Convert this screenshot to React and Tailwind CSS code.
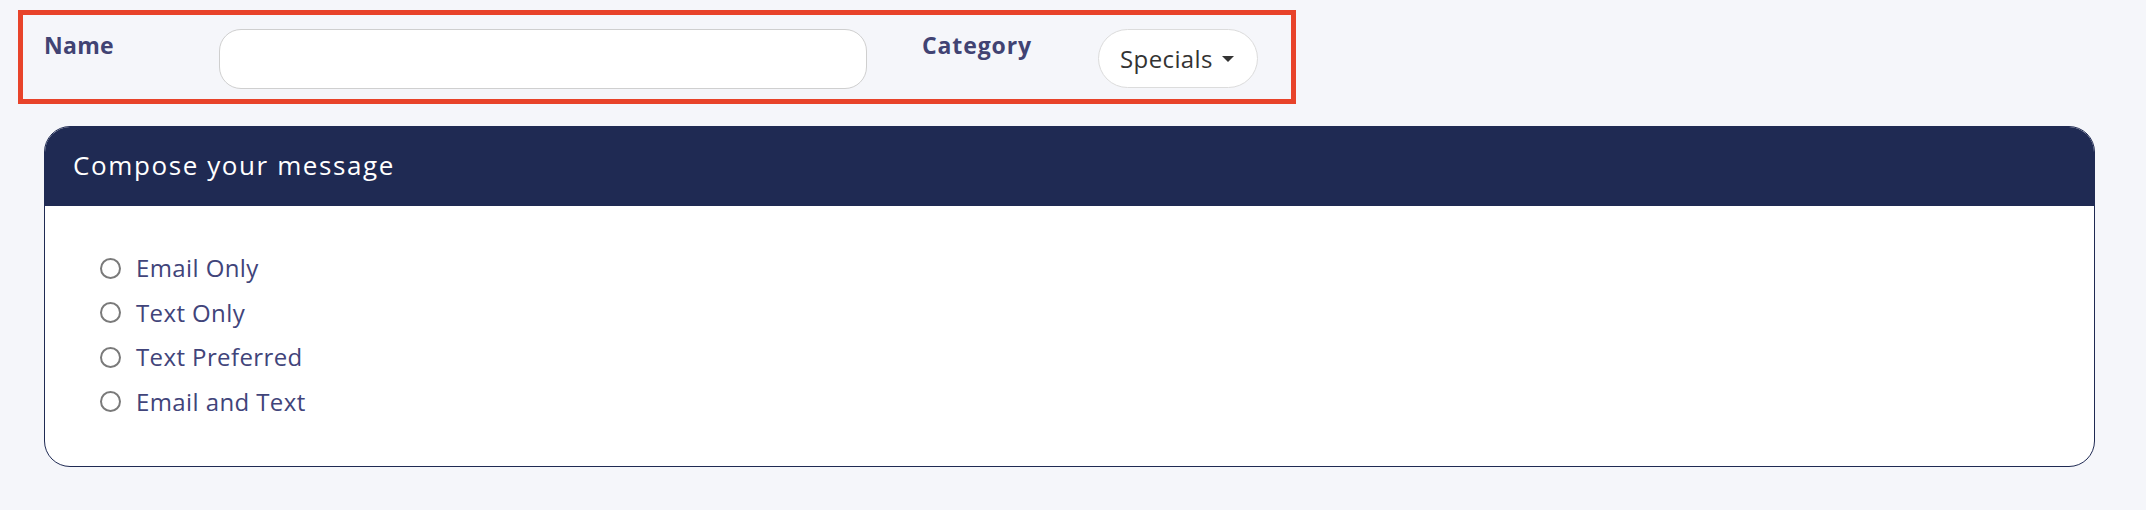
import React from "react";

const font = { fontFamily: '"Open Sans", "Noto Sans", sans-serif' };

function Radio({ label }) {
  return (
    <label className="flex h-[44.5px] items-center">
      <span className="ml-[55px] box-border h-[21px] w-[21px] rounded-full border-2 border-[#7a7a7a] bg-white" />
      <span className="ml-[15px] text-[24px] font-medium leading-none tracking-[0.4px] text-[#41447a]">{label}</span>
    </label>
  );
}

export default function App() {
  return (
    <div className="min-h-[510px] w-full bg-[#f5f6fa] pt-[10px]" style={font}>
      <div className="ml-[18px] box-border h-[94px] w-[1278px] border-[5px] border-[#e8432a]">
        <div className="flex items-start pl-[21px] pt-[14px]">
          <div className="w-[175px] pt-[5px] text-[23px] font-bold leading-none tracking-[0.3px] text-[#414373]">Name</div>
          <input
            type="text"
            className="box-border h-[60px] w-[648px] rounded-[22px] border border-[#cfcfcf] bg-white px-4 outline-none"
          />
          <div className="ml-[55px] w-[176px] pt-[5px] text-[23px] font-bold leading-none tracking-[0.9px] text-[#414373]">Category</div>
          <button className="box-border flex h-[59px] w-[160px] items-center rounded-full border border-[#dcdcdc] bg-white pl-[21px] text-[24px] text-[#333333]">
            <span className="leading-none tracking-[0.4px]">Specials</span>
            <svg className="ml-[9px]" width="12" height="6" viewBox="0 0 12 6">
              <path d="M0 0 L12 0 L6 6 Z" fill="#333333" />
            </svg>
          </button>
        </div>
      </div>

      <div className="mb-[43px] ml-[44px] mr-[51px] mt-[22px] overflow-hidden rounded-[26px] border border-[#1f2a53] bg-white">
        <div className="flex h-[79px] items-center bg-[#1f2a53] pb-[3px] pl-[28px]">
          <span className="text-[26px] leading-none tracking-[1.6px] text-white">Compose your message</span>
        </div>
        <div className="pb-[42px] pt-[40px]">
          <Radio label="Email Only" />
          <Radio label="Text Only" />
          <Radio label="Text Preferred" />
          <Radio label="Email and Text" />
        </div>
      </div>
    </div>
  );
}
